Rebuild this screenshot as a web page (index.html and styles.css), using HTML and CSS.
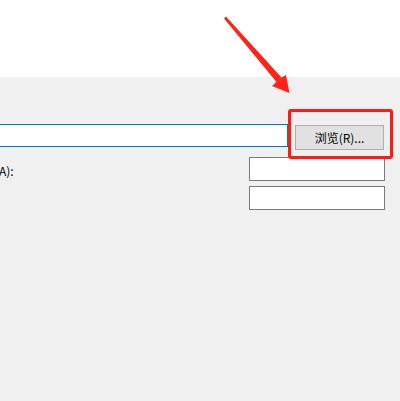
FILE: index.html
```html
<!DOCTYPE html>
<html lang="zh-CN">
<head>
<meta charset="utf-8">
<link rel="stylesheet" href="styles.css">
</head>
<body>
<div class="top"></div>
<div class="panel">
  <div class="row row-path">
    <div class="path-input"></div>
    <button class="browse">浏览(R)...</button>
  </div>
  <div class="row row-field">
    <span class="label">A):</span>
    <div class="field"></div>
  </div>
  <div class="row row-field second">
    <div class="field"></div>
  </div>
</div>
<div class="highlight"></div>
<svg class="arrow" width="400" height="120" viewBox="0 0 400 120">
  <polygon points="224,18.5 226,16.5 281.5,77.5 286,75 289.5,93 272,86 276.5,82" fill="#ff2318"/>
</svg>
</body>
</html>
```

FILE: styles.css
```css
html, body {
  margin: 0;
  padding: 0;
  width: 400px;
  height: 401px;
  overflow: hidden;
  background: #ffffff;
  font-family: "Noto Sans CJK SC", "Liberation Sans", sans-serif;
  font-size: 12px;
  color: #000;
}

.top {
  height: 77px;
  background: #ffffff;
}

.panel {
  height: 324px;
  background: #f0f0f0;
  padding-top: 47px;
  box-sizing: border-box;
  display: flex;
  flex-direction: column;
}

.row {
  display: flex;
  align-items: flex-start;
}

.row-path {
  height: 26px;
}

.path-input {
  margin-left: -10px;
  width: 296px;
  height: 21px;
  border: 1px solid #0078d7;
  background: #fff;
}

.browse {
  margin-left: 7px;
  margin-top: 1px;
  width: 89px;
  height: 25px;
  box-sizing: border-box;
  border: 1px solid #adadad;
  background: #e1e1e1;
  font-family: "Noto Sans CJK SC", "Liberation Sans", sans-serif;
  font-size: 12px;
  color: #000;
  padding: 0;
  line-height: 22px;
}

.row-field {
  margin-top: 7px;
  height: 24px;
  align-items: center;
}

.row-field.second {
  margin-top: 5px;
}

.label {
  margin-left: -1px;
  line-height: 16px;
  margin-top: 3px;
}

.field {
  margin-left: auto;
  margin-right: 15px;
  width: 134px;
  height: 22px;
  border: 1px solid #7a7a7a;
  background: #fff;
}

.highlight {
  position: absolute;
  left: 288px;
  top: 109px;
  width: 105px;
  height: 50px;
  box-sizing: border-box;
  border: 3px solid #ff1a12;
  border-radius: 3px;
}

.arrow {
  position: absolute;
  left: 0;
  top: 0;
}
```
